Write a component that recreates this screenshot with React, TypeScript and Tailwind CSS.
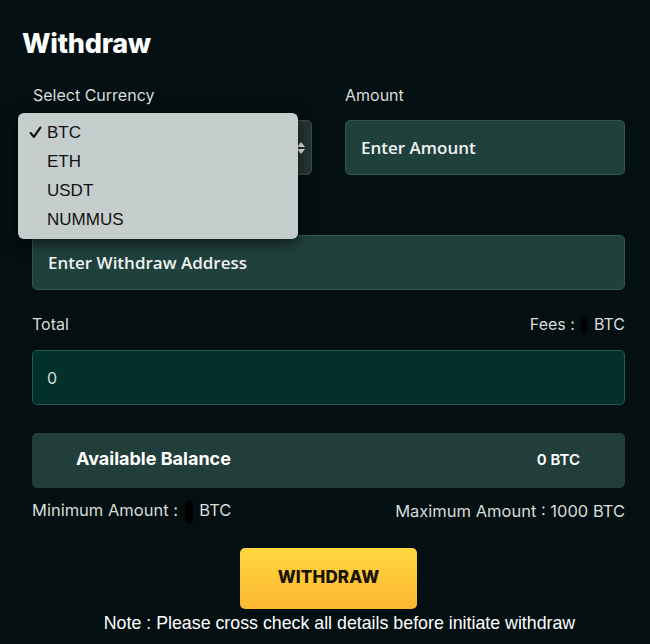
import { useState } from "react";

const currencies = ["BTC", "ETH", "USDT", "NUMMUS"];

function Redacted({ className }: { className: string }) {
  return <span className={`inline-block rounded-sm bg-black align-middle ${className}`} />;
}

export default function App() {
  const [currency, setCurrency] = useState("BTC");

  return (
    <div
      className="min-h-[644px] w-[650px] bg-[#030f10] text-white"
      style={{ fontFamily: "Inter, 'Liberation Sans', sans-serif" }}
    >
      <div className="pl-[32px] pr-[25px] pt-[28px]">
        <h1 className="-ml-[10px] text-[27px] font-extrabold leading-[32px] tracking-[-0.01em]">
          Withdraw
        </h1>

        <div className="mt-[25px] grid grid-cols-2 gap-[33px]">
          <div>
            <label className="block pl-[1px] text-[16px] leading-[20px] text-[#d8dcdc]">Select Currency</label>
            <div className="relative mt-[15px]">
              <div className="flex h-[55px] w-[280px] items-center justify-end rounded-[5px] border border-[#3c4b49] bg-[#243431] pr-[5px]">
                <svg width="10" height="16" viewBox="0 0 10 16">
                  <path d="M5 2 L9 7 H1 Z" fill="#e8ecec" />
                  <path d="M5 14 L9 9 H1 Z" fill="#e8ecec" />
                </svg>
              </div>
              <ul
                className="absolute -left-[14px] -top-[7px] z-10 w-[280px] rounded-[6px] bg-[#c6cdcd] py-[5px] text-[17px] text-[#111] shadow-[0_4px_14px_rgba(0,0,0,0.6)]"
                style={{ fontFamily: "'Liberation Sans', Arial, sans-serif" }}
              >
                {currencies.map((c) => (
                  <li
                    key={c}
                    onClick={() => setCurrency(c)}
                    className="flex h-[29px] cursor-default items-center"
                  >
                    <span className="flex w-[29px] justify-end pr-[5px]">
                      {currency === c && (
                        <svg width="13" height="13" viewBox="0 0 12 12">
                          <path d="M1.5 6.5 L4.5 10 L10.5 1.5" fill="none" stroke="#111" strokeWidth="2" strokeLinecap="round" strokeLinejoin="round" />
                        </svg>
                      )}
                    </span>
                    {c}
                  </li>
                ))}
              </ul>
            </div>
          </div>
          <div>
            <label className="block text-[16px] leading-[20px] text-[#d8dcdc]">Amount</label>
            <input
              placeholder="Enter Amount"
              className="mt-[15px] h-[55px] w-[280px] rounded-[5px] border border-[#2f5752] bg-[#20403c] px-[15px] text-[17px] font-semibold text-white outline-none placeholder:text-[#eef2f1]"
              style={{ fontFamily: "'Open Sans', sans-serif" }}
            />
          </div>
        </div>

        <input
          placeholder="Enter Withdraw Address"
          className="mt-[60px] h-[55px] w-full rounded-[5px] border border-[#2f5752] bg-[#20403c] px-[15px] text-[17px] font-semibold text-white outline-none placeholder:text-[#eef2f1]"
          style={{ fontFamily: "'Open Sans', sans-serif" }}
        />

        <div className="mt-[24px] flex items-center justify-between text-[16px] leading-[20px] text-[#d8dcdc]">
          <span>Total</span>
          <span>
            Fees : <Redacted className="mx-[2px] h-[16px] w-[6px]" /> BTC
          </span>
        </div>
        <div className="mt-[16px] flex h-[55px] items-center rounded-[5px] border border-[#1f5b50] bg-[#03302b] px-[14px] text-[16px] text-[#d8dcdc]">
          0
        </div>

        <div className="mt-[28px] flex h-[55px] items-center justify-between rounded-[5px] bg-[#223e3a] pl-[44px] pr-[45px]">
          <span className="-mt-[5px] text-[18px] font-bold">Available Balance</span>
          <span className="text-[15px] font-semibold">0 BTC</span>
        </div>

        <div className="mt-[12px] flex items-center justify-between text-[16.5px] leading-[20px] text-[#d8dcdc]">
          <span>
            Minimum Amount : <Redacted className="mx-[2px] h-[22px] w-[8px]" /> BTC
          </span>
          <span>Maximum Amount : 1000 BTC</span>
        </div>

        <div className="mt-[25px] flex flex-col items-center">
          <button className="h-[61px] w-[177px] rounded-[5px] bg-gradient-to-b from-[#ffd83f] to-[#fbb631] text-[17px] font-extrabold tracking-[0.01em] text-[#1a1204]">
            WITHDRAW
          </button>
          <p
            className="ml-[22px] mt-[4px] text-[17.8px] font-medium leading-[20px] text-white"
            style={{ fontFamily: "'Liberation Sans', Arial, sans-serif" }}
          >
            Note : Please cross check all details before initiate withdraw
          </p>
        </div>
      </div>
    </div>
  );
}
